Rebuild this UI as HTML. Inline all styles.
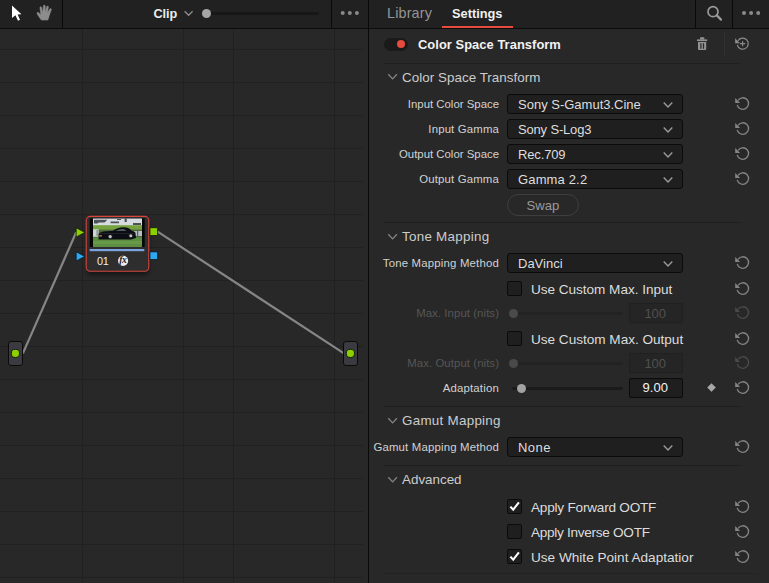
<!DOCTYPE html>
<html lang="en">
<head>
<meta charset="utf-8">
<title>Color Space Transform</title>
<style>
*{box-sizing:border-box;margin:0;padding:0}
html,body{width:769px;height:583px;overflow:hidden;background:#282828}
body{font-family:"Liberation Sans",sans-serif;color:#d2d2d2;position:relative}
#app{position:absolute;left:0;top:0;width:769px;height:583px;overflow:hidden;background:#282828}
.abs{position:absolute}
.t{position:absolute;white-space:nowrap;line-height:1}
#lbar{position:absolute;left:0;top:0;width:368px;height:28px;background:#212121}
#rbar{position:absolute;left:369px;top:0;width:400px;height:28px;background:#212121}
.hline{position:absolute;left:0;top:28px;width:769px;height:1px;background:#0c0c0c}
.vdiv{position:absolute;top:0;width:1px;background:#0a0a0a}
.lbl{position:absolute;white-space:nowrap;text-align:right;font-size:11.4px;line-height:14px;color:#d2d2d2;width:160px;left:339px}
.lbl.dis{color:#565656}
.dd{position:absolute;left:507px;width:176px;height:20px;background:#1f1f1f;border:1px solid #0b0b0b;border-radius:3px}
.dd span{position:absolute;left:10px;top:2px;font-size:13px;line-height:15px;color:#dedede;white-space:nowrap}
.dd svg{position:absolute;left:154px;top:6px}
.sec{position:absolute;left:402px;font-size:13.4px;line-height:16px;color:#cccccc;white-space:nowrap}
.chev{position:absolute;left:387px}
.sep{position:absolute;left:384px;width:357px;height:1px;background:#1f1f1f}
.cb{position:absolute;left:507px;width:15px;height:15px;background:#1f1f1f;border:1px solid #0b0b0b;border-radius:2px}
.cbl{position:absolute;left:531px;font-size:13.6px;line-height:16px;color:#dcdcdc;white-space:nowrap}
.num{position:absolute;left:629px;width:54px;height:20px;background:#1f1f1f;border:1px solid #0b0b0b;border-radius:2px;text-align:center;font-size:13px;line-height:18px;color:#f2f2f2;padding-right:1.5px}
.num.dis{background:#252525;border-color:#202020;color:#505050;line-height:20px}
.trk{position:absolute;left:512px;width:111px;height:3px;background:#1b1b1b;border-radius:2px}
.trk.dis{background:#232323}
.knob{position:absolute;width:9px;height:9px;border-radius:50%;background:#a2a2a2}
.knob.dis{background:#4a4a4a}
.rst{position:absolute;left:734px;width:18px;height:16px}
</style>
</head>
<body>
<div id="app">
  <svg class="abs" style="left:0;top:29px" width="368" height="554" viewBox="0 29 368 554">
    <defs>
      <filter id="bl" x="-10%" y="-10%" width="120%" height="120%"><feGaussianBlur stdDeviation="0.55"/></filter>
      <filter id="sh" x="-30%" y="-30%" width="160%" height="170%"><feGaussianBlur stdDeviation="2.2"/></filter>
      <clipPath id="tc"><rect x="93" y="218.4" width="49" height="28.6"/></clipPath>
    </defs>
    <rect x="0" y="29" width="368" height="554" fill="#282828"/>
    <g stroke="#212121" stroke-width="1" shape-rendering="crispEdges" fill="none">
      <path d="M0 49.5H363M0 82.5H363M0 115.5H363M0 148.5H363M0 181.5H363M0 214.5H363M0 247.5H363M0 280.5H363M0 313.5H363M0 346.5H363M0 379.5H363M0 412.5H363M0 445.5H363M0 478.5H363M0 511.5H363M0 544.5H363M0 577.5H363"/>
      <path d="M82.5 29V583M183.5 29V583M233.5 29V583M334.5 29V583"/>
    </g>
    <g stroke="#868686" stroke-width="2.2" fill="none" stroke-linecap="butt">
      <line x1="22.9" y1="353.4" x2="76.2" y2="232.2"/>
      <line x1="157.6" y1="231.6" x2="343.6" y2="353.2"/>
    </g>
    <g>
      <rect x="8.5" y="341.5" width="14" height="24" rx="2.5" fill="#3a3a40" stroke="#0a0a0a"/>
      <circle cx="15.4" cy="353.4" r="4.1" fill="#8dd000" stroke="#141c08" stroke-width="1"/>
      <rect x="343.5" y="341.5" width="14" height="24" rx="2.5" fill="#3a3a40" stroke="#0a0a0a"/>
      <circle cx="350.4" cy="353.4" r="4.1" fill="#8dd000" stroke="#141c08" stroke-width="1"/>
    </g>
    <g>
      <rect x="87" y="219" width="62" height="56" rx="5" fill="#000" opacity="0.45" filter="url(#sh)"/>
      <rect x="86.2" y="216.4" width="62.6" height="54.8" rx="4" fill="#2e2e2e" stroke="#d6453b" stroke-width="1.1"/>
      <rect x="89.7" y="218.4" width="55" height="28.6" fill="#060606"/>
      <g clip-path="url(#tc)">
        <g filter="url(#bl)">
          <rect x="92" y="217" width="51" height="9" fill="#d6dbe0"/>
          <rect x="92" y="225.2" width="51" height="5.2" fill="#76a340"/>
          <rect x="92" y="229.6" width="51" height="8" fill="#50693c"/>
          <rect x="92" y="237.2" width="51" height="11" fill="#5c8f42"/>
          <rect x="92" y="241" width="51" height="3" fill="#669a49"/>
          <path d="M94 219.8 H107.4 L104.6 222.4 H99 L97.4 223.6 H94Z M110.6 221.4 H119 V223.2 H110.6Z M124.6 218.6 H126.8 V222 H124.6Z M133 223 H141 V225 H133Z M117 219 H121 V220 H117Z" fill="#4d5355"/>
          <rect x="93" y="229.2" width="5.6" height="7.6" fill="#cfd4d6"/>
          <rect x="96.6" y="230" width="1" height="6" fill="#6e7a70"/>
          <rect x="134.4" y="231" width="7.6" height="5" fill="#b7bdc2"/>
          <rect x="137" y="231" width="1.2" height="5" fill="#5a625c"/>
          <path d="M98.6 239.6 L98.6 234 Q100 231.6 106 231.2 L113 230.8 Q117.4 227 124 227.2 Q129.6 227.6 131.8 230.8 L135.4 232.6 L136 238 L131 239.4 Z" fill="#0d1012"/>
          <path d="M115.6 231 Q118.6 229 123.6 229 L126.6 230.8 Z" fill="#59666c"/>
          <path d="M100 233.6 H133" stroke="#2c3236" stroke-width="0.6" fill="none"/>
          <circle cx="110.2" cy="236.6" r="2.6" fill="#1a1c1e"/><circle cx="110.2" cy="236.6" r="1.6" fill="#c2c6c8"/>
          <circle cx="130.8" cy="235.8" r="2.4" fill="#1a1c1e"/><circle cx="130.8" cy="235.8" r="1.5" fill="#c2c6c8"/>
          <rect x="99.2" y="235.2" width="2.8" height="1.3" fill="#c8792c"/>
        </g>
      </g>
      <rect x="89.7" y="249" width="54.6" height="2.2" fill="#7da4dc"/>
      <circle cx="123.1" cy="260.8" r="5.1" fill="#ececec"/>
      <path d="M76.2 227.8 L84.8 232.4 L76.2 237Z" fill="#8dd000" stroke="#10140a" stroke-width="0.7"/>
      <path d="M76.2 251.8 L84.8 256.4 L76.2 261Z" fill="#2ba9f3" stroke="#0a1014" stroke-width="0.7"/>
      <rect x="150" y="227.8" width="7.6" height="7.6" fill="#8dd000" stroke="#10140a" stroke-width="0.7"/>
      <rect x="150" y="251.9" width="7.6" height="7.6" fill="#2ba9f3" stroke="#0a1014" stroke-width="0.7"/>
    </g>
  </svg>
  <div class="t" style="left:97px;top:255px;font-size:10.9px;line-height:12px;color:#ececec;letter-spacing:-0.3px">01</div>
  <div class="t" style="left:119.2px;top:255.2px;font-family:'Liberation Serif','DejaVu Serif',serif;font-style:italic;font-weight:700;font-size:9.5px;line-height:11px;color:#1a1a1a;letter-spacing:-0.4px">fx</div>
  <div id="lbar"></div>
  <div id="rbar"></div>
  <div class="hline"></div>
  <div class="vdiv" style="left:62px;height:28px"></div>
  <div class="vdiv" style="left:331px;height:28px"></div>
  <div class="vdiv" style="left:368px;height:583px"></div>
  <div class="vdiv" style="left:695px;height:28px"></div>
  <div class="vdiv" style="left:732px;height:28px"></div>
  <svg class="abs" style="left:0;top:0" width="368" height="28" viewBox="0 0 368 28">
    <path d="M12 5.5 L12 18 L15.4 15.2 L18 20.7 L20 19.8 L17.6 14.5 L21.4 14.2 Z" fill="#ffffff"/>
    <g fill="#8c8c8c" stroke="#8c8c8c" stroke-width="0.5" stroke-linejoin="round" transform="translate(0.5 0.1)">
      <path d="M41 20 C39.4 18.2 37.8 15.8 36.6 13.6 C36.1 12.6 37.3 11.8 38.2 12.6 L40.3 14.8 L39.4 7.6 C39.3 6.5 40.9 6.2 41.1 7.3 L42.3 12.3 L42.9 5.8 C43 4.7 44.6 4.7 44.7 5.8 L44.9 12.2 L46.2 6.6 C46.5 5.6 48 5.9 47.9 7 L47.1 12.7 L49.3 8.9 C49.9 8 51.2 8.7 50.8 9.7 L48.8 15.4 C48.4 17.2 47.9 18.8 47.3 20 Z"/>
    </g>
    <rect x="207" y="12" width="112" height="3" rx="1.4" fill="#171717"/>
    <circle cx="206.5" cy="13.5" r="4.5" fill="#a6a6a6"/>
    <path d="M184.6 11.2 L188.6 15.3 L192.6 11.2" fill="none" stroke="#8a8a8a" stroke-width="1.4"/>
    <circle cx="342.7" cy="13" r="2" fill="#8a8a8a"/>
    <circle cx="349.8" cy="13" r="2" fill="#8a8a8a"/>
    <circle cx="356.9" cy="13" r="2" fill="#8a8a8a"/>
  </svg>
  <div class="t" style="left:153.4px;top:6px;font-size:12.7px;font-weight:700;color:#ebebeb;line-height:16px">Clip</div>
  <div class="t" style="left:387px;top:5px;font-size:14.4px;color:#949494;line-height:17px;letter-spacing:0.15px">Library</div>
  <div class="t" style="left:452px;top:5px;font-size:12.8px;font-weight:700;color:#f0f0f0;line-height:17px">Settings</div>
  <div class="abs" style="left:442px;top:26px;width:71px;height:2px;background:#e64b3d"></div>
  <svg class="abs" style="left:695px;top:0" width="74" height="28" viewBox="695 0 74 28">
    <circle cx="713" cy="11.7" r="5" fill="none" stroke="#9a9a9a" stroke-width="1.7"/>
    <path d="M716.8 15.4 L721 19.6" stroke="#9a9a9a" stroke-width="2.2" stroke-linecap="round"/>
    <circle cx="744" cy="12.9" r="2" fill="#8a8a8a"/>
    <circle cx="751.1" cy="12.9" r="2" fill="#8a8a8a"/>
    <circle cx="758.2" cy="12.9" r="2" fill="#8a8a8a"/>
  </svg>
  <div class="abs" style="left:384px;top:37.5px;width:24px;height:13px;border-radius:6.5px;background:#1a1a1a"></div>
  <div class="abs" style="left:397px;top:40px;width:8px;height:8px;border-radius:50%;background:#e64b3d"></div>
  <div class="t" style="left:418px;top:37px;font-size:12.9px;font-weight:700;color:#f2f2f2;line-height:16px;letter-spacing:0.05px">Color Space Transform</div>
  <svg class="abs" style="left:695px;top:32px" width="60" height="24" viewBox="695 32 60 24">
    <g fill="#929292">
      <rect x="697" y="39.4" width="10.2" height="1.7"/>
      <rect x="700" y="37.2" width="4.4" height="2.4" rx="0.8"/>
      <path d="M698 42 H706.2 V49 Q706.2 50 705.2 50 H699 Q698 50 698 49 Z M700.3 43.3 V48.8 H701.5 V43.3 Z M702.9 43.3 V48.8 H704.1 V43.3 Z" fill-rule="evenodd"/>
    </g>
    <rect x="724" y="33" width="1" height="22" fill="#323232"/>
    <g transform="translate(742.7 43.6)">
      <path d="M-5.4 1.3 A5.55 5.55 0 1 0 -4.7 -2.9" fill="none" stroke="#8c8c8c" stroke-width="1.2"/>
      <path d="M-7.6 -5.4 V-0.4 H-2.7 Z" fill="#8c8c8c"/>
      <path d="M-0.1 -2.6 V2.6 M-2.7 0 H2.5" fill="none" stroke="#8c8c8c" stroke-width="1.1"/>
    </g>
  </svg>
  <div class="sep" style="top:63px"></div>
<svg class="chev" style="top:73px" width="12" height="9" viewBox="0 0 12 9"><path d="M1.3 1.3 L5.6 5.9 L9.9 1.3" fill="none" stroke="#858585" stroke-width="1.3"/></svg><div class="sec" style="top:70px;letter-spacing:0.04px">Color Space Transform</div>
<div class="lbl" style="top:97px;letter-spacing:0.0px">Input Color Space</div><div class="dd" style="top:94px"><span style="letter-spacing:0.0px">Sony S-Gamut3.Cine</span><svg width="12" height="9" viewBox="0 0 12 9"><path d="M1.7 1.5 L6 6 L10.3 1.5" fill="none" stroke="#9a9a9a" stroke-width="1.4"/></svg></div>
<div class="lbl" style="top:122px;letter-spacing:0.15px">Input Gamma</div><div class="dd" style="top:119px"><span style="letter-spacing:-0.17px">Sony S-Log3</span><svg width="12" height="9" viewBox="0 0 12 9"><path d="M1.7 1.5 L6 6 L10.3 1.5" fill="none" stroke="#9a9a9a" stroke-width="1.4"/></svg></div>
<div class="lbl" style="top:147px;letter-spacing:0.0px">Output Color Space</div><div class="dd" style="top:144px"><span style="letter-spacing:-0.15px">Rec.709</span><svg width="12" height="9" viewBox="0 0 12 9"><path d="M1.7 1.5 L6 6 L10.3 1.5" fill="none" stroke="#9a9a9a" stroke-width="1.4"/></svg></div>
<div class="lbl" style="top:172px;letter-spacing:0.16px">Output Gamma</div><div class="dd" style="top:169px"><span style="letter-spacing:0.15px">Gamma 2.2</span><svg width="12" height="9" viewBox="0 0 12 9"><path d="M1.7 1.5 L6 6 L10.3 1.5" fill="none" stroke="#9a9a9a" stroke-width="1.4"/></svg></div>
<div class="abs" style="left:507px;top:194px;width:72px;height:22px;border:1px solid #3e3e3e;border-radius:11px;text-align:center;font-size:13.1px;line-height:22px;color:#9a9a9a">Swap</div>
<div class="sep" style="top:222px"></div>
<svg class="chev" style="top:233px" width="12" height="9" viewBox="0 0 12 9"><path d="M1.3 1.3 L5.6 5.9 L9.9 1.3" fill="none" stroke="#858585" stroke-width="1.3"/></svg><div class="sec" style="top:229px;letter-spacing:0.27px">Tone Mapping</div>
<div class="lbl" style="top:256px;letter-spacing:0.18px">Tone Mapping Method</div><div class="dd" style="top:253px"><span style="letter-spacing:0.0px">DaVinci</span><svg width="12" height="9" viewBox="0 0 12 9"><path d="M1.7 1.5 L6 6 L10.3 1.5" fill="none" stroke="#9a9a9a" stroke-width="1.4"/></svg></div>
<div class="cb" style="top:281px"></div><div class="cbl" style="top:282px;letter-spacing:-0.04px">Use Custom Max. Input</div>
<div class="lbl dis" style="top:306px;letter-spacing:0.07px">Max. Input (nits)</div><div class="trk dis" style="top:312.0px"></div><div class="knob dis" style="left:509.0px;top:309.0px"></div><div class="num dis" style="top:303px">100</div>
<div class="cb" style="top:331px"></div><div class="cbl" style="top:332px;letter-spacing:-0.02px">Use Custom Max. Output</div>
<div class="lbl dis" style="top:356px;letter-spacing:0.07px">Max. Output (nits)</div><div class="trk dis" style="top:362.0px"></div><div class="knob dis" style="left:509.0px;top:359.0px"></div><div class="num dis" style="top:353px">100</div>
<div class="lbl" style="top:381px;letter-spacing:0.19px">Adaptation</div><div class="trk" style="top:387.0px"></div><div class="knob" style="left:517.0px;top:384.0px"></div><div class="num" style="top:378px">9.00</div>
<svg class="abs" style="left:705px;top:381px" width="14" height="14" viewBox="0 0 14 14"><path d="M6.5 1.8 L11.2 6.5 L6.5 11.2 L1.8 6.5 Z" fill="#a8a8a8" stroke="#1a1a1a" stroke-width="0.8"/></svg>
<div class="sep" style="top:406px"></div>
<svg class="chev" style="top:417px" width="12" height="9" viewBox="0 0 12 9"><path d="M1.3 1.3 L5.6 5.9 L9.9 1.3" fill="none" stroke="#858585" stroke-width="1.3"/></svg><div class="sec" style="top:413px;letter-spacing:0.27px">Gamut Mapping</div>
<div class="lbl" style="top:440px;letter-spacing:0.17px">Gamut Mapping Method</div><div class="dd" style="top:437px"><span style="letter-spacing:0.45px">None</span><svg width="12" height="9" viewBox="0 0 12 9"><path d="M1.7 1.5 L6 6 L10.3 1.5" fill="none" stroke="#9a9a9a" stroke-width="1.4"/></svg></div>
<div class="sep" style="top:465px"></div>
<svg class="chev" style="top:476px" width="12" height="9" viewBox="0 0 12 9"><path d="M1.3 1.3 L5.6 5.9 L9.9 1.3" fill="none" stroke="#858585" stroke-width="1.3"/></svg><div class="sec" style="top:472px">Advanced</div>
<div class="cb" style="top:499px"></div><svg class="abs" style="left:507px;top:499px" width="15" height="15" viewBox="0 0 15 15"><path d="M3.4 7.6 L6.2 10.6 L11.9 3.3" fill="none" stroke="#ffffff" stroke-width="2.1"/></svg><div class="cbl" style="top:500px;letter-spacing:-0.22px">Apply Forward OOTF</div>
<div class="cb" style="top:524px"></div><div class="cbl" style="top:525px;letter-spacing:-0.29px">Apply Inverse OOTF</div>
<div class="cb" style="top:549px"></div><svg class="abs" style="left:507px;top:549px" width="15" height="15" viewBox="0 0 15 15"><path d="M3.4 7.6 L6.2 10.6 L11.9 3.3" fill="none" stroke="#ffffff" stroke-width="2.1"/></svg><div class="cbl" style="top:550px;letter-spacing:0px">Use White Point Adaptatior</div>
<div class="sep" style="top:573px;width:374px;background:#222"></div>
<svg width="0" height="0" style="position:absolute"><defs>
  <g id="rst"><path d="M-5.6 1.3 A5.75 5.75 0 1 0 -4.9 -3.0" fill="none" stroke-width="1.3"/><path d="M-7.6 -5.4 V-0.4 H-2.7 Z" stroke="none"/></g>
</defs></svg>
<svg class="rst" style="top:95px" viewBox="-8.8 -8.50 18 16"><use href="#rst" stroke="#858585" fill="#858585"/></svg>
<svg class="rst" style="top:120px" viewBox="-8.8 -8.50 18 16"><use href="#rst" stroke="#858585" fill="#858585"/></svg>
<svg class="rst" style="top:145px" viewBox="-8.8 -8.50 18 16"><use href="#rst" stroke="#858585" fill="#858585"/></svg>
<svg class="rst" style="top:170px" viewBox="-8.8 -8.50 18 16"><use href="#rst" stroke="#858585" fill="#858585"/></svg>
<svg class="rst" style="top:254px" viewBox="-8.8 -8.50 18 16"><use href="#rst" stroke="#858585" fill="#858585"/></svg>
<svg class="rst" style="top:280px" viewBox="-8.8 -8.50 18 16"><use href="#rst" stroke="#858585" fill="#858585"/></svg>
<svg class="rst" style="top:304px" viewBox="-8.8 -8.50 18 16"><use href="#rst" stroke="#4a4a4a" fill="#4a4a4a"/></svg>
<svg class="rst" style="top:330px" viewBox="-8.8 -8.50 18 16"><use href="#rst" stroke="#858585" fill="#858585"/></svg>
<svg class="rst" style="top:354px" viewBox="-8.8 -8.50 18 16"><use href="#rst" stroke="#4a4a4a" fill="#4a4a4a"/></svg>
<svg class="rst" style="top:379px" viewBox="-8.8 -8.50 18 16"><use href="#rst" stroke="#858585" fill="#858585"/></svg>
<svg class="rst" style="top:438px" viewBox="-8.8 -8.50 18 16"><use href="#rst" stroke="#858585" fill="#858585"/></svg>
<svg class="rst" style="top:498px" viewBox="-8.8 -8.50 18 16"><use href="#rst" stroke="#858585" fill="#858585"/></svg>
<svg class="rst" style="top:523px" viewBox="-8.8 -8.50 18 16"><use href="#rst" stroke="#858585" fill="#858585"/></svg>
<svg class="rst" style="top:548px" viewBox="-8.8 -8.50 18 16"><use href="#rst" stroke="#858585" fill="#858585"/></svg>
</div>
</body>
</html>
